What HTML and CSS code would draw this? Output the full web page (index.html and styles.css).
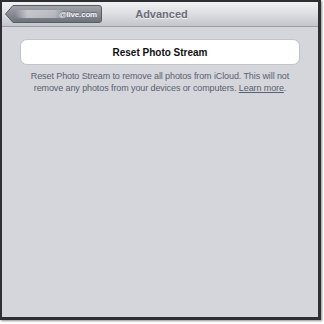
FILE: index.html
```html
<!DOCTYPE html>
<html>
<head>
<meta charset="utf-8">
<link rel="stylesheet" href="styles.css">
</head>
<body>
<div class="frame">
  <div class="navbar">
    <div class="back">
      <svg class="back-bg" width="97" height="18" viewBox="0 0 97 18">
        <defs>
          <linearGradient id="bg" x1="0" y1="0" x2="0" y2="1">
            <stop offset="0" stop-color="#a3a6ad"/>
            <stop offset="0.5" stop-color="#878a92"/>
            <stop offset="1" stop-color="#6c7079"/>
          </linearGradient>
          <linearGradient id="blur" x1="0" y1="0" x2="1" y2="0">
            <stop offset="0" stop-color="#d8d9dc" stop-opacity="0"/>
            <stop offset="0.25" stop-color="#d8d9dc" stop-opacity="0.75"/>
            <stop offset="0.8" stop-color="#d8d9dc" stop-opacity="0.6"/>
            <stop offset="1" stop-color="#d8d9dc" stop-opacity="0"/>
          </linearGradient>
        </defs>
        <path d="M0.5 9 L8 0.5 H94 Q96.5 0.5 96.5 3 V15 Q96.5 17.5 94 17.5 H8 Z" fill="url(#bg)" stroke="#5a5d64" stroke-width="1"/>
        <rect x="10" y="5" width="50" height="8" rx="4" fill="url(#blur)"/>
      </svg>
      <span class="back-text">@live.com</span>
    </div>
    <div class="title">Advanced</div>
  </div>
  <div class="content">
    <div class="reset-btn">Reset Photo Stream</div>
    <p class="desc">Reset Photo Stream to remove all photos from iCloud. This will not remove any photos from your devices or computers. <u>Learn more</u>.</p>
  </div>
</div>
</body>
</html>
```
FILE: styles.css
```css
html, body {
  margin: 0;
  padding: 0;
  background: #ffffff;
}
body {
  width: 324px;
  height: 324px;
  font-family: "Liberation Sans", Arial, sans-serif;
}
.frame {
  box-sizing: border-box;
  width: 321px;
  height: 320px;
  border: 2px solid #2e2f33;
  border-right-width: 3px;
  border-bottom-width: 3px;
  background: #d5d6db;
  box-shadow: 1px 1px 2px rgba(0,0,0,0.45);
  display: flex;
  flex-direction: column;
}
.navbar {
  height: 25px;
  flex: none;
  box-sizing: border-box;
  background: linear-gradient(#f1f1f3, #dfe0e4 45%, #c3c5cc);
  border-bottom: 1px solid #9c9ea6;
  display: grid;
  grid-template-columns: 1fr auto 1fr;
  align-items: center;
  padding-left: 3px;
}
.back {
  position: relative;
  width: 97px;
  height: 18px;
  justify-self: start;
  display: flex;
  align-items: center;
  justify-content: flex-end;
}
.back-bg {
  position: absolute;
  left: 0;
  top: 0;
}
.back-text {
  position: relative;
  color: #f4f4f6;
  font-weight: bold;
  font-size: 8px;
  padding-right: 5px;
  letter-spacing: -0.2px;
  text-shadow: 0 -1px 0 rgba(0,0,0,0.3);
}
.title {
  color: #6a6e78;
  font-weight: bold;
  font-size: 11px;
  text-shadow: 0 1px 0 rgba(255,255,255,0.7);
}
.content {
  padding: 12px 18px 0 18px;
}
.reset-btn {
  height: 26px;
  background: #ffffff;
  border-radius: 7px;
  border: 1px solid #c3c4c9;
  box-sizing: border-box;
  display: flex;
  align-items: center;
  justify-content: center;
  font-weight: bold;
  font-size: 10px;
  color: #111;
}
.desc {
  margin: 5px 0 0 0;
  text-align: center;
  font-size: 9px;
  line-height: 12px;
  letter-spacing: -0.1px;
  color: #5a6070;
  padding: 0 4px;
}
```
